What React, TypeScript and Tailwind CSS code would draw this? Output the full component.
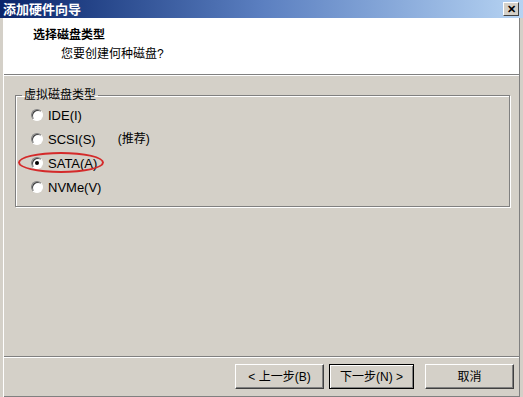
const font = { fontFamily: '"Liberation Sans", "Noto Sans CJK SC", sans-serif' };

function Radio({ checked }: { checked?: boolean }) {
  return (
    <span className="relative inline-flex h-[12px] w-[12px] items-center justify-center rounded-full border border-[#808080] border-r-white border-b-white bg-white shadow-[inset_1px_1px_0_#404040]">
      {checked && <span className="h-[4px] w-[4px] rounded-full bg-black" />}
    </span>
  );
}

function Option({ label, checked, note, circled }: { label: string; checked?: boolean; note?: string; circled?: boolean }) {
  return (
    <div className="relative flex h-[24px] items-center">
      <div className="ml-[15px] flex items-center gap-[5px]">
        <Radio checked={checked} />
        <span className="text-[13px] leading-none text-black">{label}</span>
      </div>
      {note && <span className="ml-[22px] text-[12px] leading-none text-black">{note}</span>}
      {circled && (
        <span className="absolute left-[2px] top-[1px] h-[21px] w-[86px] rounded-[50%] border-2 border-[#d42a2a]" />
      )}
    </div>
  );
}

function Button({ children, primary }: { children: React.ReactNode; primary?: boolean }) {
  return (
    <button
      type="button"
      className={`flex h-[25px] items-center justify-center bg-[#d4d0c8] text-[12px] text-black ${
        primary
          ? 'w-[85px] border border-black shadow-[inset_1px_1px_0_#fff,inset_-1px_-1px_0_#808080]'
          : 'w-[89px] border border-white border-r-[#404040] border-b-[#404040] shadow-[inset_-1px_-1px_0_#808080]'
      }`}
    >
      {children}
    </button>
  );
}

export default function App() {
  return (
    <div style={font} className="flex h-[397px] w-[523px] flex-col overflow-hidden bg-[#d4d0c8]">
      {/* Title bar */}
      <div className="flex h-[18px] items-center justify-between bg-gradient-to-r from-[#0a246a] via-[#5b7fc0] to-[#b6d3f2] pl-[3px] pr-[4px]">
        <span className="text-[13px] font-bold leading-none text-white">添加硬件向导</span>
        <span className="flex h-[14px] w-[16px] items-center justify-center border border-white border-r-[#404040] border-b-[#404040] bg-[#d4d0c8] text-[11px] font-bold leading-none text-black">
          ✕
        </span>
      </div>

      <div className="ml-[3px] mr-[3px] flex flex-1 flex-col border-l border-r border-l-white border-r-[#808080]">
        {/* Header */}
        <div className="h-[56px] bg-white pt-[10px]">
          <div className="ml-[29px] text-[12px] font-bold leading-[14px] text-black">选择磁盘类型</div>
          <div className="ml-[57px] mt-[5px] text-[12px] leading-[14px] text-black">您要创建何种磁盘?</div>
        </div>
        <div className="h-px bg-[#808080]" />
        <div className="h-px bg-white" />

        {/* Body */}
        <div className="flex-1 px-[11px] pt-[12px]">
          <fieldset className="h-[119px] w-[495px] border border-[#808080] pb-0 pl-0 pr-0 shadow-[1px_1px_0_#fff,inset_1px_1px_0_#fff]">
            <legend className="ml-[6px] px-[2px] text-[12px] leading-[14px] text-black">虚拟磁盘类型</legend>
            <div className="mt-[1px] flex flex-col">
              <Option label="IDE(I)" />
              <Option label="SCSI(S)" note="(推荐)" />
              <Option label="SATA(A)" checked circled />
              <Option label="NVMe(V)" />
            </div>
          </fieldset>
        </div>

        {/* Footer */}
        <div className="h-px bg-[#808080]" />
        <div className="h-px bg-white" />
        <div className="flex h-[39px] items-start justify-end gap-[5px] border-b border-b-[#808080] pr-[5px] pt-[6px]">
          <Button>&lt; 上一步(B)</Button>
          <Button primary>下一步(N) &gt;</Button>
          <div className="ml-[6px]">
            <Button>取消</Button>
          </div>
        </div>
      </div>
    </div>
  );
}
